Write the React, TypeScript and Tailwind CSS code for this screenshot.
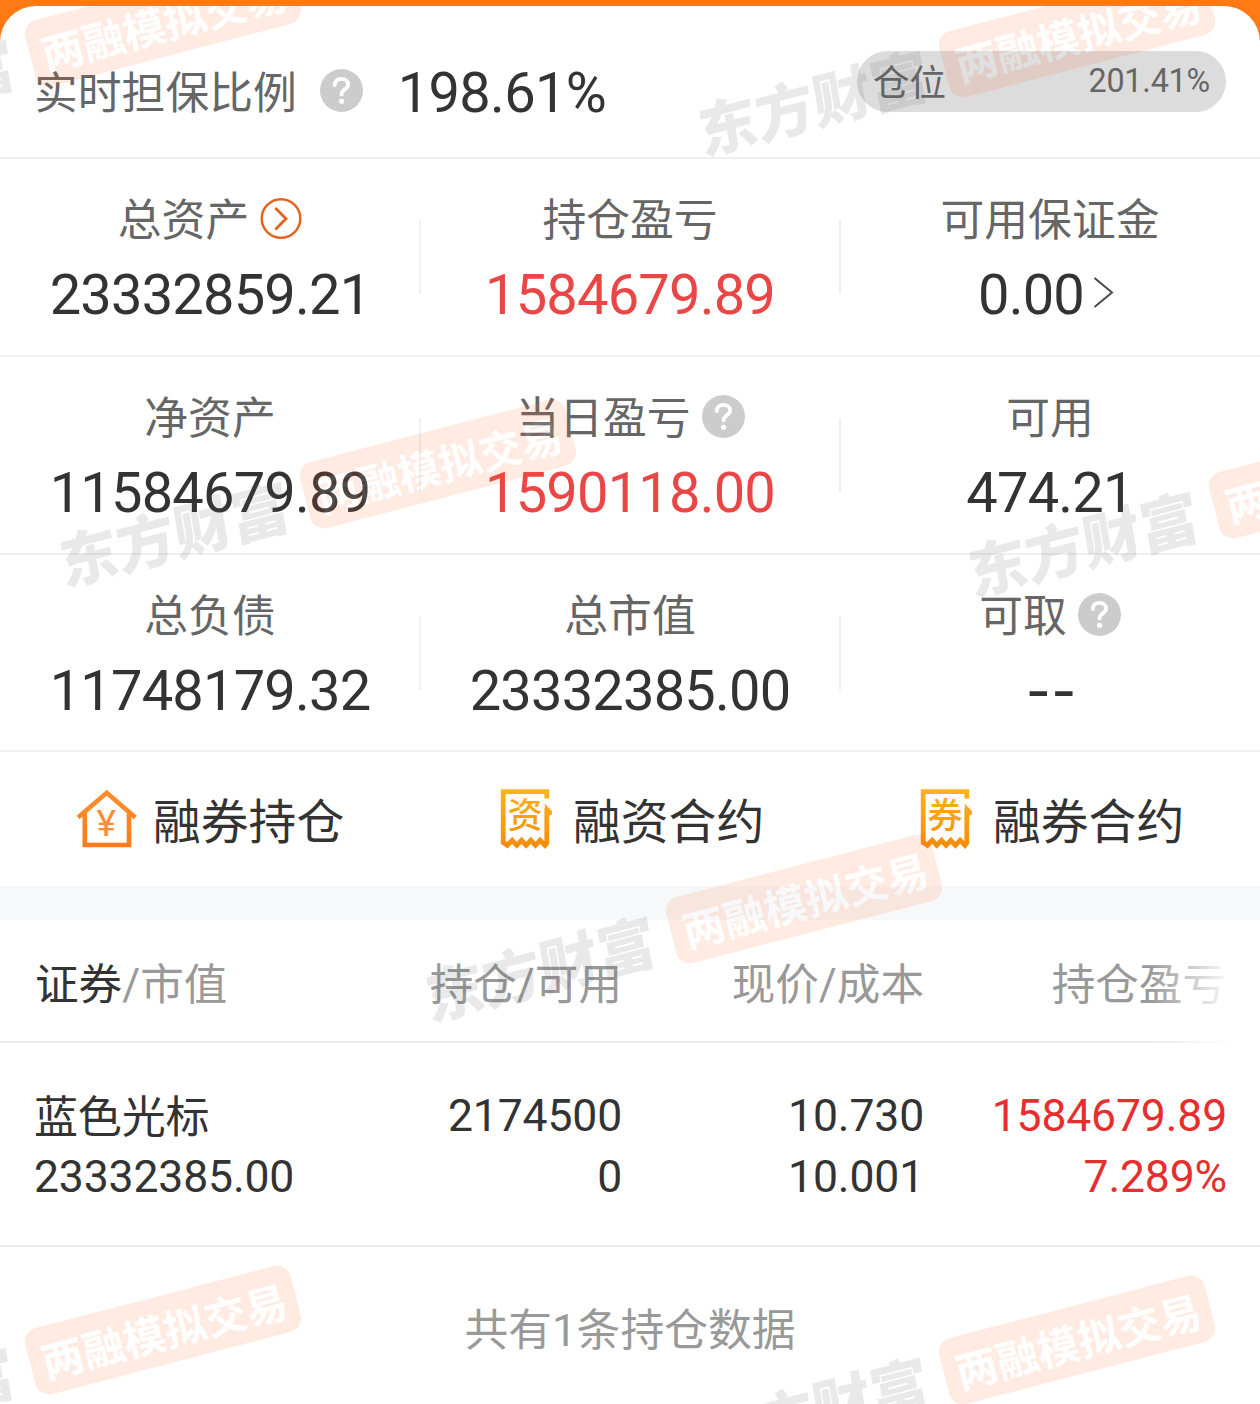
import type { ReactNode } from 'react';

interface Metric {
  label: string;
  value: string;
  tone?: 'up';
  labelIcon?: 'help' | 'go';
  arrow?: boolean;
}

interface Holding {
  name: string;
  marketValue: string;
  amount: string;
  available: string;
  price: string;
  cost: string;
  profit: string;
  profitRate: string;
}

const metricRows: Metric[][] = [
  [
    { label: '总资产', value: '23332859.21', labelIcon: 'go' },
    { label: '持仓盈亏', value: '1584679.89', tone: 'up' },
    { label: '可用保证金', value: '0.00', arrow: true },
  ],
  [
    { label: '净资产', value: '11584679.89' },
    { label: '当日盈亏', value: '1590118.00', tone: 'up', labelIcon: 'help' },
    { label: '可用', value: '474.21' },
  ],
  [
    { label: '总负债', value: '11748179.32' },
    { label: '总市值', value: '23332385.00' },
    { label: '可取', value: '--', labelIcon: 'help' },
  ],
];

const holdings: Holding[] = [
  {
    name: '蓝色光标',
    marketValue: '23332385.00',
    amount: '2174500',
    available: '0',
    price: '10.730',
    cost: '10.001',
    profit: '1584679.89',
    profitRate: '7.289%',
  },
];

// Centre of the orange badge in each watermark
const watermarks = [
  [163, 22],
  [1077, 33],
  [438, 464],
  [1347, 474],
  [804, 899],
  [163, 1330],
  [1077, 1340],
];

function HelpIcon() {
  return (
    <svg width="43" height="43" viewBox="0 0 43 43" fill="none" className="shrink-0">
      <circle cx="21.5" cy="21.5" r="21.5" fill="#cccccc" />
      <path
        d="M14.8 16C14.8 12 17.6 9.9 21.4 9.9C25.3 9.9 28.1 12.2 28.1 15.7C28.1 19.9 21.6 20.3 21.6 25.4"
        stroke="#fff"
        strokeWidth="3.9"
        strokeLinecap="round"
      />
      <circle cx="21.6" cy="32.3" r="2.6" fill="#fff" />
    </svg>
  );
}

function GoIcon() {
  return (
    <svg width="42" height="42" viewBox="0 0 42 42" fill="none" stroke="#e8611c" className="shrink-0">
      <circle cx="21" cy="21.5" r="19.3" strokeWidth="2.4" />
      <path d="M15.3 11L26 21.7L15.3 32.5" strokeWidth="2.8" />
    </svg>
  );
}

function HouseIcon() {
  return (
    <svg width="62" height="60" viewBox="0 0 62 60" fill="none">
      <defs>
        <linearGradient id="house" x1="0" y1="0" x2="0" y2="60" gradientUnits="userSpaceOnUse">
          <stop stopColor="#ff8f2c" />
          <stop offset="1" stopColor="#fb7a1c" />
        </linearGradient>
      </defs>
      <g stroke="url(#house)" strokeWidth="4.6">
        <path d="M2 28.5L30.7 3.8L59.4 28.5" />
        <path d="M8.8 23V56H53V23" />
      </g>
      <text x="30.2" y="46.5" textAnchor="middle" fill="#ff8a35" className="font-['Roboto',sans-serif] text-[37px]">
        ¥
      </text>
    </svg>
  );
}

function TicketIcon({ text, id }: { text: string; id: string }) {
  return (
    <svg width="54" height="63" viewBox="0 0 54 63" fill="none">
      <defs>
        <linearGradient id={id} x1="0" y1="0" x2="0" y2="62" gradientUnits="userSpaceOnUse">
          <stop stopColor="#ffb41c" />
          <stop offset="1" stopColor="#f28a08" />
        </linearGradient>
      </defs>
      <path
        d="M46.8 10.5V3.6H3.2V54.5L7.3 57.3L12.2 52.3L16.8 57.3L21.5 52.3L26.1 57.3L30.8 52.3L35.4 57.3L40.1 52.3L45 57.3L46.8 55V20"
        stroke={`url(#${id})`}
        strokeWidth="4.8"
      />
      <path d="M44.5 15.5L51.8 23V26.8L46.5 28Z" fill="#fba31a" />
      <text x="25" y="40" textAnchor="middle" fill={`url(#${id})`} className="font-['Noto_Sans_CJK_SC',sans-serif] text-[35px] font-medium">
        {text}
      </text>
    </svg>
  );
}

function Watermark() {
  return (
    <svg className="pointer-events-none absolute inset-x-0 top-[6px]" width="1260" height="1398" viewBox="0 6 1260 1398">
      {watermarks.map(([x, y]) => (
        <g key={`${x}-${y}`} transform={`translate(${x} ${y}) rotate(-14.6)`} opacity="0.12">
          <rect x="-137" y="-34" width="274" height="68" rx="14" fill="#ff611e" />
          <text x="1" y="18" textAnchor="middle" fill="#fff" className="font-['Noto_Sans_CJK_SC',sans-serif] text-[42px] font-bold">
            两融模拟交易
          </text>
          <text
            x="-273"
            y="24"
            textAnchor="middle"
            fill="#555"
            transform="skewX(-5)"
            className="font-['Noto_Sans_CJK_SC',sans-serif] text-[59px] font-black"
          >
            东方财富
          </text>
        </g>
      ))}
    </svg>
  );
}

function MetricCell({ metric, divider }: { metric: Metric; divider: boolean }) {
  return (
    <div className="relative flex w-[420px] flex-col items-center pt-[34px]">
      <div className="flex h-[50px] items-center gap-[11px] text-[43.8px] leading-[50px] text-[#666]">
        <span className="pt-[5px]">{metric.label}</span>
        {metric.labelIcon === 'help' && <HelpIcon />}
        {metric.labelIcon === 'go' && <GoIcon />}
      </div>
      <div
        className={`mt-5 flex h-[64px] items-center text-[56px] leading-[64px] tracking-[-0.8px] ${
          metric.tone === 'up' ? 'text-[#eb4646]' : 'text-[#333]'
        }`}
      >
        {metric.value === '--' ? (
          <span className="-mt-[14px] pl-1 font-['Noto_Sans_CJK_SC',sans-serif] text-[68px] tracking-[2px]">--</span>
        ) : (
          <span>{metric.value}</span>
        )}
        {metric.arrow && (
          <svg width="38" height="34" viewBox="0 0 38 34" fill="none" stroke="#4a4a4a" strokeWidth="2" className="-mt-1.5">
            <path d="M10.5 3L28 17.5L10.5 32" />
          </svg>
        )}
      </div>
      {divider && <div className="absolute right-[-1px] top-[61px] h-[74px] w-[2px] bg-[#f0f0f0]" />}
    </div>
  );
}

function Action({ icon, children }: { icon: ReactNode; children: ReactNode }) {
  return (
    <div className="flex w-[420px] items-center pl-[76px] text-[47.8px] text-[#333]">
      <div className="flex w-[77px] shrink-0">{icon}</div>
      <span className="pt-[7px] leading-[60px]">{children}</span>
    </div>
  );
}

export default function App() {
  return (
    <div className="relative h-[1404px] w-[1260px] overflow-hidden bg-[#ff7a14] pt-[6px] font-['Roboto','Noto_Sans_CJK_SC',sans-serif]">
      <div className="h-[1398px] rounded-t-[36px] bg-white">
        {/* Guarantee ratio */}
        <div className="flex h-[153px] items-start border-b-2 border-[#efefef] pl-[34px] pr-[34px]">
          <span className="mt-[61px] text-[43.8px] leading-[54px] text-[#666]">实时担保比例</span>
          <div className="ml-[23px] mt-[63px]">
            <HelpIcon />
          </div>
          <span className="ml-[35px] mt-[55px] text-[56px] leading-[64px] tracking-[-0.7px] text-[#333]">198.61%</span>
          <div className="ml-auto mt-[45px] flex h-[61px] w-[369px] items-center justify-between rounded-full bg-[#dcdcdc] px-4 text-[#666]">
            <span className="pt-[4px] text-[36.5px] leading-[60px]">仓位</span>
            <span className="pb-[2px] text-[32.3px] leading-[60px] tracking-[-0.2px]">201.41%</span>
          </div>
        </div>

        {/* Asset overview */}
        {metricRows.map((row, rowIndex) => (
          <div
            key={row[0].label}
            className={`flex border-b-2 border-[#efefef] ${rowIndex === metricRows.length - 1 ? 'h-[197px]' : 'h-[198px]'}`}
          >
            {row.map((metric, index) => (
              <MetricCell key={metric.label} metric={metric} divider={index < 2} />
            ))}
          </div>
        ))}

        {/* Shortcuts */}
        <div className="flex h-[134px]">
          <Action icon={<HouseIcon />}>融券持仓</Action>
          <Action icon={<div className="pl-1"><TicketIcon text="资" id="ticket-fund" /></div>}>融资合约</Action>
          <Action icon={<div className="pl-1"><TicketIcon text="券" id="ticket-bond" /></div>}>融券合约</Action>
        </div>
        <div className="h-[34px] bg-[#f7f8fa]" />

        {/* Holdings */}
        <div className="relative flex h-[123px] items-center border-b-2 border-[#ebebeb] pl-[35px] pt-[10px] text-[43.6px] text-[#999]">
          <div className="w-[260px]">
            <span className="text-[#333]">证券</span>/市值
          </div>
          <div className="w-[327px] text-right">持仓/可用</div>
          <div className="w-[302px] text-right">现价/成本</div>
          <div className="w-[302px] text-right">持仓盈亏</div>
          <div className="absolute -bottom-[2px] right-0 top-0 w-[110px] bg-linear-to-r from-transparent via-white/80 via-60% to-white to-80%" />
        </div>
        {holdings.map((item) => (
          <div
            key={item.name}
            className="flex h-[204px] border-b-2 border-[#ebebeb] pl-[34px] pt-[43px] text-[44.5px] leading-[61px] tracking-[-0.15px] text-[#333]"
          >
            <div className="w-[280px]">
              <div className="-mb-[2px] pt-[2px] text-[44px]">{item.name}</div>
              <div>{item.marketValue}</div>
            </div>
            <div className="w-[308px] text-right">
              <div>{item.amount}</div>
              <div>{item.available}</div>
            </div>
            <div className="w-[302px] text-right">
              <div>{item.price}</div>
              <div>{item.cost}</div>
            </div>
            <div className="w-[303px] text-right text-[#e62e2e]">
              <div>{item.profit}</div>
              <div>{item.profitRate}</div>
            </div>
          </div>
        ))}

        <div className="pt-[54px] text-center text-[43.8px] leading-[60px] text-[#999]">共有1条持仓数据</div>
      </div>
      <Watermark />
    </div>
  );
}
